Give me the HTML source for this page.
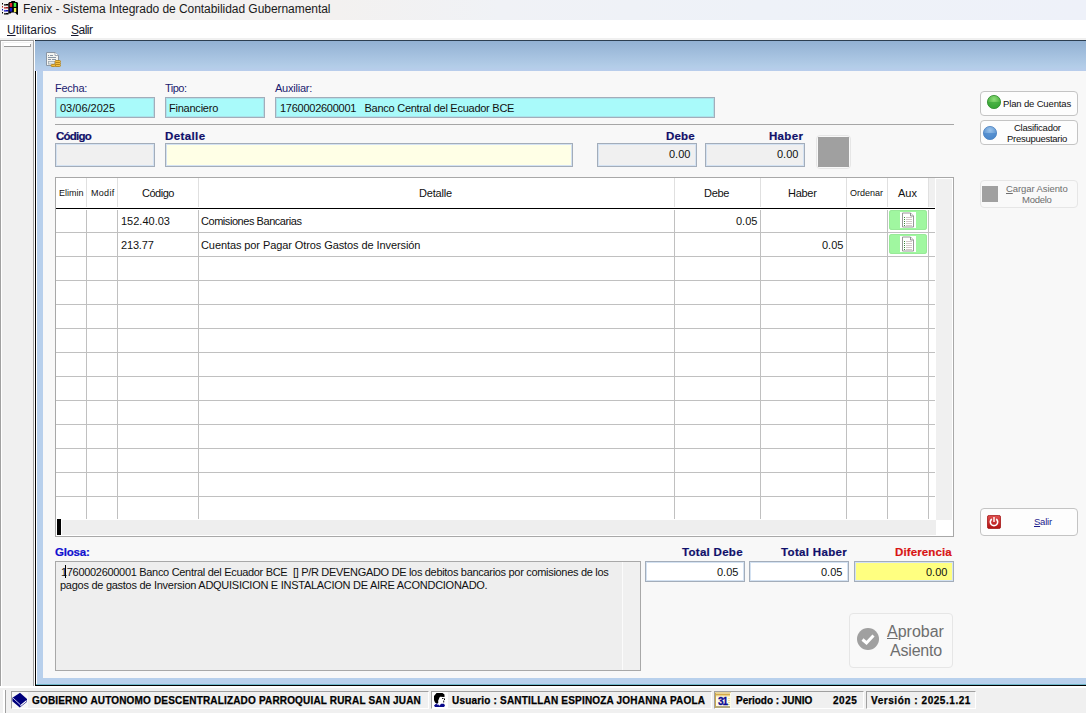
<!DOCTYPE html>
<html lang="es">
<head>
<meta charset="utf-8">
<title>Fenix - Sistema Integrado de Contabilidad Gubernamental</title>
<style>
html,body{margin:0;padding:0;}
body{width:1086px;height:713px;overflow:hidden;position:relative;background:#f0f0f0;font-family:"Liberation Sans",sans-serif;font-size:11px;color:#000;}
.a{position:absolute;white-space:nowrap;}
#titlebar{left:0;top:0;width:1086px;height:20px;background:linear-gradient(90deg,#f3f1f1 0%,#f3f1f0 31%,#f0f2f6 46%,#eef2f8 70%,#eef1f9 100%);}
#menubar{left:0;top:20px;width:1086px;height:18px;background:#fff;}
.tt{font-size:12px;line-height:14px;color:#1a1a1a;}
.mn{font-size:12px;line-height:14px;color:#18182c;}
.mn u{text-decoration:underline;text-underline-offset:1px;}
#leftpanel{left:0;top:40px;width:34px;height:647px;background:#f0f0f0;border:1px solid #a0a0a0;border-bottom:none;box-shadow:inset 1px 1px 0 #fff;box-sizing:border-box;}
#mdi{left:35px;top:40px;width:1051px;height:646px;background:#b8d0ec;border-top:1px solid #2c3e50;border-left:1px solid #000;border-bottom:1px solid #000;box-sizing:border-box;box-shadow:inset 0 -1px 0 #6fb6c8;}
#grad{left:35px;top:41px;width:1051px;height:30px;background:linear-gradient(#92b1d3,#b3cde8 85%,#b9cdec);}
#form{left:43px;top:71px;width:1043px;height:607px;background:#f8f8f8;}
.lbl{font-size:11px;line-height:13px;color:#1c1c70;}
.blbl{font-size:11.5px;line-height:13px;color:#10106a;font-weight:bold;-webkit-text-stroke-width:0.2px;}
.box{box-sizing:border-box;border:1px solid #a3adba;box-shadow:inset 0 0 0 1px #d4e2f2;}
.cy{background:#a9fafa;box-shadow:inset 0 0 0 1px #a9e2ea;}
.gy{background:#f0f0f0;}
.tx{font-size:11px;line-height:13px;color:#111;}
.r{text-align:right;}
.btn{box-sizing:border-box;border:1px solid #c4c4c4;border-radius:4px;background:#fdfdfd;}
.btnd{box-sizing:border-box;border:1px solid #e6e6e6;border-radius:4px;background:#f9f9f9;}
.bt{font-size:9.5px;line-height:11px;color:#111;text-align:center;}
.vl{width:1px;background:linear-gradient(#e0e0e0,#e0e0e0) 0 0/1px 29px no-repeat,linear-gradient(#fff,#fff) 0 29px/1px 3px no-repeat,#c0c0c0;}
.hl{height:1px;background:#c0c0c0;}
.th{font-size:11px;line-height:13px;color:#111;text-align:center;}
.ths{font-size:9px;line-height:11px;color:#111;text-align:center;}
.sp{box-sizing:border-box;border-left:1px solid #a0a0a0;border-top:1px solid #a0a0a0;border-right:1px solid #fff;border-bottom:1px solid #fff;height:18px;top:691px;}
.st{font-size:10px;line-height:13px;font-weight:bold;color:#000;top:694px;-webkit-text-stroke-width:0.25px;}
</style>
</head>
<body>
<!-- title bar -->
<div id="titlebar" class="a"></div>
<svg class="a" style="left:0px;top:0px" width="20" height="16" viewBox="0 0 20 16">
 <g fill="#000"><rect x="2" y="3" width="1" height="1.500"/><rect x="2" y="12" width="1" height="1.500"/>
 <path d="M4 4 L5 4.600 L6 4 L8.500 4 L8.500 5.500 L4 5.500 Z"/><path d="M4 13 L5 13.600 L6 13 L8.500 13 L8.500 14.600 L4 14.600 Z"/></g>
 <g fill="#b01818"><rect x="2" y="6" width="1" height="1.500"/><path d="M4 7 L5 7.600 L6 7 L8.500 7 L8.500 8.500 L4 8.500 Z"/></g>
 <g fill="#1010c0"><rect x="2" y="9" width="1" height="1.500"/><path d="M4 10 L5 10.600 L6 10 L8.500 10 L8.500 11.500 L4 11.500 Z"/></g>
 <path d="M8.300 3 L9.500 2 L11 2 L11.500 1 L14.800 1 L15.500 2 L17 2 L18 3 L18 14.800 L17 14.800 L15.200 12.500 L11.500 12.500 L10.500 13.600 L8.300 13.600 Z" fill="#000"/>
 <rect x="9.700" y="3" width="2.500" height="3.900" fill="#e82830"/>
 <rect x="13.700" y="2.900" width="2.500" height="4" fill="#38e840"/>
 <rect x="9.700" y="7.900" width="2.500" height="3.700" fill="#1818c8"/>
 <rect x="13.900" y="8" width="2.300" height="4" fill="#f0f050"/>
</svg>
<div id="t_title" class="a tt" style="left:23px;top:2px;letter-spacing:-0.05px;">Fenix - Sistema Integrado de Contabilidad Gubernamental</div>
<!-- menu bar -->
<div id="menubar" class="a"></div>
<div id="t_m1" class="a mn" style="left:7px;top:23px;"><u>U</u>tilitarios</div>
<div id="t_m2" class="a mn" style="left:71px;top:23px;letter-spacing:-0.50px;"><u>S</u>alir</div>

<!-- left panel -->
<div id="leftpanel" class="a"></div>
<div class="a" style="left:4px;top:43px;width:27px;height:3px;background:#fff;"></div>
<div class="a" style="left:4px;top:46px;width:27px;height:1px;background:#9a9a9a;"></div>
<div class="a" style="left:30px;top:44px;width:1px;height:3px;background:#9a9a9a;"></div>
<div class="a" style="left:34px;top:40px;width:1px;height:647px;background:#fff;"></div>

<!-- mdi area -->
<div id="mdi" class="a"></div>
<div id="grad" class="a"></div>
<div class="a" style="left:36px;top:71px;width:1px;height:613px;background:#fff;"></div>
<div id="form" class="a"></div>

<!-- toolbar icon -->
<svg class="a" style="left:45px;top:51px" width="17" height="17" viewBox="0 0 17 17">
 <path d="M1.5 1.5 H10 L13.5 4.5 V14.5 H1.5 Z" fill="#f4f4f0" stroke="#8a96a4" stroke-width="1"/>
 <path d="M10 1.5 V4.5 H13.500" fill="#fff" stroke="#8a96a4" stroke-width="0.8"/>
 <g fill="#8a96a4"><rect x="3" y="4" width="1" height="1"/><rect x="5" y="4" width="3" height="1"/><rect x="3" y="6" width="8" height="1"/><rect x="3" y="8" width="3" height="1"/><rect x="7" y="8" width="4" height="1"/></g>
 <rect x="3.500" y="10.5" width="6" height="2.500" fill="#e8ece8" stroke="#a0aab0" stroke-width="0.8"/>
 <g stroke="#b07c10" stroke-width="0.8" fill="#f4c040"><rect x="10" y="9.5" width="5.500" height="2" rx="1"/><rect x="10" y="11.5" width="5.500" height="2" rx="1"/><rect x="10" y="13.500" width="5.500" height="2" rx="1"/><rect x="6" y="13.500" width="4.500" height="2" rx="1"/></g>
</svg>

<!-- top fields -->
<div id="l_fecha" class="a lbl" style="left:55px;top:82px;letter-spacing:-0.24px;">Fecha:</div>
<div id="l_tipo" class="a lbl" style="left:165px;top:82px;letter-spacing:-0.50px;">Tipo:</div>
<div id="l_aux" class="a lbl" style="left:275px;top:82px;letter-spacing:-0.23px;">Auxiliar:</div>
<div class="a box cy" style="left:55px;top:97px;width:100px;height:21px;"></div>
<div class="a box cy" style="left:165px;top:97px;width:100px;height:21px;"></div>
<div class="a box cy" style="left:275px;top:97px;width:440px;height:21px;"></div>
<div id="v_fecha" class="a tx" style="left:60px;top:102px;">03/06/2025</div>
<div id="v_tipo" class="a tx" style="left:169px;top:102px;letter-spacing:-0.23px;">Financiero</div>
<div id="v_aux" class="a tx" style="left:280px;top:102px;letter-spacing:-0.26px;">1760002600001&nbsp;&nbsp; Banco Central del Ecuador BCE</div>

<div class="a" style="left:55px;top:124px;width:899px;height:1px;background:#a6a6a6;"></div>

<div id="l_cod" class="a blbl" style="left:56px;top:130px;letter-spacing:-0.75px;">Código</div>
<div id="l_det" class="a blbl" style="left:165px;top:130px;letter-spacing:0.40px;">Detalle</div>
<div id="l_debe" class="a blbl" style="left:666px;top:130px;letter-spacing:0.16px;">Debe</div>
<div id="l_haber" class="a blbl" style="left:769px;top:130px;letter-spacing:0.32px;">Haber</div>
<div class="a box gy" style="left:55px;top:143px;width:100px;height:24px;"></div>
<div class="a box" style="left:165px;top:143px;width:408px;height:24px;background:#ffffe6;"></div>
<div class="a box gy" style="left:597px;top:143px;width:100px;height:24px;"></div>
<div class="a box gy" style="left:705px;top:143px;width:100px;height:24px;"></div>
<div id="v_debe" class="a tx" style="left:669px;top:148px;">0.00</div>
<div id="v_haber" class="a tx" style="left:777px;top:148px;">0.00</div>
<div class="a btnd" style="left:816px;top:135px;width:35px;height:34px;"></div>
<div class="a" style="left:818px;top:137px;width:31px;height:30px;background:#a0a0a0;"></div>

<!-- grid -->
<div id="grid" class="a" style="left:55px;top:177px;width:899px;height:360px;box-sizing:border-box;border:1px solid #a8a8a8;background:#fff;"></div>
<div class="a" style="left:936px;top:179px;width:16px;height:341px;background:#f0f0f0;"></div>
<div class="a" style="left:929px;top:178px;width:6px;height:29px;background:#f0f0f0;"></div>
<div class="a" style="left:62px;top:520px;width:874px;height:15px;background:#eeeeee;"></div>
<div class="a" style="left:57px;top:519px;width:4px;height:16px;background:#000;"></div>
<!-- vertical lines -->
<div class="a vl" style="left:86px;top:178px;height:341px;"></div>
<div class="a vl" style="left:117px;top:178px;height:341px;"></div>
<div class="a vl" style="left:198px;top:178px;height:341px;"></div>
<div class="a vl" style="left:674px;top:178px;height:341px;"></div>
<div class="a vl" style="left:760px;top:178px;height:341px;"></div>
<div class="a vl" style="left:846px;top:178px;height:341px;"></div>
<div class="a vl" style="left:887px;top:178px;height:341px;"></div>
<div class="a vl" style="left:928px;top:178px;height:341px;"></div>
<!-- horizontal lines -->
<div class="a" style="left:56px;top:208px;width:879px;height:1px;background:#000;"></div>
<div class="a hl" style="left:56px;top:232px;width:879px;"></div>
<div class="a hl" style="left:56px;top:256px;width:879px;"></div>
<div class="a hl" style="left:56px;top:280px;width:879px;"></div>
<div class="a hl" style="left:56px;top:304px;width:879px;"></div>
<div class="a hl" style="left:56px;top:328px;width:879px;"></div>
<div class="a hl" style="left:56px;top:352px;width:879px;"></div>
<div class="a hl" style="left:56px;top:376px;width:879px;"></div>
<div class="a hl" style="left:56px;top:400px;width:879px;"></div>
<div class="a hl" style="left:56px;top:424px;width:879px;"></div>
<div class="a hl" style="left:56px;top:448px;width:879px;"></div>
<div class="a hl" style="left:56px;top:472px;width:879px;"></div>
<div class="a hl" style="left:56px;top:496px;width:879px;"></div>
<!-- header text -->
<div id="h_elim" class="a ths" style="left:59px;top:188px;text-align:left;">Elimin</div>
<div id="h_mod" class="a ths" style="left:91px;top:188px;text-align:left;letter-spacing:0.30px;">Modif</div>
<div id="h_cod" class="a th" style="left:142px;top:187px;text-align:left;letter-spacing:-0.48px;">Código</div>
<div id="h_det" class="a th" style="left:419px;top:187px;text-align:left;letter-spacing:-0.17px;">Detalle</div>
<div id="h_debe" class="a th" style="left:704px;top:187px;text-align:left;letter-spacing:-0.29px;">Debe</div>
<div id="h_haber" class="a th" style="left:788px;top:187px;text-align:left;letter-spacing:-0.28px;">Haber</div>
<div id="h_ord" class="a ths" style="left:850px;top:188px;text-align:left;">Ordenar</div>
<div id="h_auxc" class="a th" style="left:898px;top:187px;text-align:left;">Aux</div>
<!-- rows -->
<div id="r1c" class="a tx" style="left:121px;top:215px;">152.40.03</div>
<div id="r1d" class="a tx" style="left:201px;top:215px;letter-spacing:-0.45px;">Comisiones Bancarias</div>
<div id="r1v" class="a tx" style="left:736px;top:215px;">0.05</div>
<div id="r2c" class="a tx" style="left:121px;top:239px;letter-spacing:-0.16px;">213.77</div>
<div id="r2d" class="a tx" style="left:201px;top:239px;letter-spacing:-0.09px;">Cuentas por Pagar Otros Gastos de Inversión</div>
<div id="r2v" class="a tx" style="left:822px;top:239px;">0.05</div>
<!-- aux buttons -->
<div class="a" style="left:889px;top:210px;width:38px;height:20px;background:#a0f7a0;border-radius:3px;box-shadow:inset 0 0 0 1px #98ea98;"></div>
<div class="a" style="left:889px;top:234px;width:38px;height:20px;background:#a0f7a0;border-radius:3px;box-shadow:inset 0 0 0 1px #98ea98;"></div>
<svg class="a" style="left:900px;top:212px" width="16" height="16" viewBox="0 0 16 16">
 <rect x="0" y="0" width="16" height="16" fill="#fff"/>
 <path d="M2.500 1 H10.500 L13.500 4 V15 H2.500 Z" fill="#fff" stroke="#8c8c8c" stroke-width="0.900"/>
 <path d="M10.500 1 V4 H13.500" fill="#f4f4f4" stroke="#7c7c7c" stroke-width="0.800"/>
 <g fill="#3c8a3c"><rect x="4" y="5" width="1" height="1"/><rect x="4" y="7" width="1" height="1"/><rect x="4" y="9" width="1" height="1"/><rect x="4" y="11" width="1" height="1"/><rect x="4" y="13" width="1" height="1"/></g>
 <g fill="#d4c8c8"><rect x="6" y="5" width="6" height="1"/><rect x="6" y="7" width="6" height="1"/><rect x="6" y="9" width="6" height="1"/><rect x="6" y="11" width="6" height="1"/><rect x="6" y="13" width="6" height="1"/></g>
</svg>
<svg class="a" style="left:900px;top:236px" width="16" height="16" viewBox="0 0 16 16">
 <rect x="0" y="0" width="16" height="16" fill="#fff"/>
 <path d="M2.500 1 H10.500 L13.500 4 V15 H2.500 Z" fill="#fff" stroke="#8c8c8c" stroke-width="0.900"/>
 <path d="M10.500 1 V4 H13.500" fill="#f4f4f4" stroke="#7c7c7c" stroke-width="0.800"/>
 <g fill="#3c8a3c"><rect x="4" y="5" width="1" height="1"/><rect x="4" y="7" width="1" height="1"/><rect x="4" y="9" width="1" height="1"/><rect x="4" y="11" width="1" height="1"/><rect x="4" y="13" width="1" height="1"/></g>
 <g fill="#d4c8c8"><rect x="6" y="5" width="6" height="1"/><rect x="6" y="7" width="6" height="1"/><rect x="6" y="9" width="6" height="1"/><rect x="6" y="11" width="6" height="1"/><rect x="6" y="13" width="6" height="1"/></g>
</svg>

<!-- glosa -->
<div id="l_glosa" class="a blbl" style="left:55px;top:546px;color:#1010d0;letter-spacing:-0.19px;">Glosa:</div>
<div id="glosa" class="a" style="left:55px;top:561px;width:586px;height:110px;box-sizing:border-box;border:1px solid #a8a8a8;background:#eeeeee;"></div>
<div class="a" style="left:622px;top:562px;width:1px;height:108px;background:#fbfbfb;"></div>
<div class="a" style="left:623px;top:562px;width:17px;height:108px;background:#f0f0f0;"></div>
<div id="g1" class="a tx" style="left:61px;top:566px;letter-spacing:-0.31px;">1760002600001 Banco Central del Ecuador BCE&nbsp; [] P/R DEVENGADO DE los debitos bancarios por comisiones de los</div>
<div id="g2" class="a tx" style="left:60px;top:579px;letter-spacing:-0.27px;">pagos de gastos de Inversion ADQUISICION E INSTALACION DE AIRE ACONDCIONADO.</div>
<div class="a" style="left:65px;top:565px;width:1px;height:13px;background:#000;"></div>

<!-- totals -->
<div id="l_td" class="a blbl" style="left:682px;top:546px;letter-spacing:0.29px;">Total Debe</div>
<div id="l_th" class="a blbl" style="left:781px;top:546px;letter-spacing:0.34px;">Total Haber</div>
<div id="l_df" class="a blbl" style="left:895px;top:546px;color:#d81414;letter-spacing:0.11px;">Diferencia</div>
<div class="a box" style="left:645px;top:561px;width:100px;height:21px;background:#fff;"></div>
<div class="a box" style="left:749px;top:561px;width:100px;height:21px;background:#fff;"></div>
<div class="a box" style="left:854px;top:561px;width:100px;height:21px;background:#ffff80;"></div>
<div id="v_td" class="a tx" style="left:717px;top:566px;">0.05</div>
<div id="v_th" class="a tx" style="left:821px;top:566px;">0.05</div>
<div id="v_df" class="a tx" style="left:926px;top:566px;">0.00</div>

<!-- aprobar -->
<div class="a btnd" style="left:849px;top:613px;width:104px;height:55px;"></div>
<svg class="a" style="left:856px;top:627px" width="24" height="24" viewBox="0 0 24 24">
 <circle cx="12" cy="12" r="11" fill="#a0a0a0"/>
 <path d="M6.500 12.500 L10.500 16 L17.500 8.500" fill="none" stroke="#fff" stroke-width="3"/>
</svg>
<div id="ap1" class="a" style="left:887px;top:623px;font-size:16px;line-height:18px;color:#6e6e6e;"><u>A</u>probar</div>
<div id="ap2" class="a" style="left:890px;top:642px;font-size:16px;line-height:18px;color:#6e6e6e;letter-spacing:-0.19px;">Asiento</div>

<!-- right buttons -->
<div class="a btn" style="left:980px;top:91px;width:98px;height:25px;"></div>
<svg class="a" style="left:986px;top:94px" width="16" height="16" viewBox="0 0 16 16">
 <defs><radialGradient id="gg" cx="0.5" cy="0.3" r="0.7"><stop offset="0" stop-color="#8fe07a"/><stop offset="1" stop-color="#2f9a2a"/></radialGradient></defs>
 <circle cx="8" cy="8" r="6.600" fill="url(#gg)" stroke="#2a8a2a" stroke-width="0.8"/>
 <path d="M1.800 8 A6.200 6.200 0 0 0 14.200 8 Z" fill="#3aa83a" opacity="0.7"/>
</svg>
<div id="b_plan" class="a bt" style="left:1003px;top:98px;letter-spacing:-0.15px;">Plan de Cuentas</div>

<div class="a btn" style="left:980px;top:120px;width:98px;height:25px;"></div>
<svg class="a" style="left:982px;top:125px" width="16" height="16" viewBox="0 0 16 16">
 <defs><radialGradient id="bg" cx="0.5" cy="0.3" r="0.7"><stop offset="0" stop-color="#9cc4ec"/><stop offset="1" stop-color="#4a86c8"/></radialGradient></defs>
 <circle cx="8" cy="8" r="6.600" fill="url(#bg)" stroke="#4a80c0" stroke-width="0.8"/>
 <path d="M1.800 8 A6.200 6.200 0 0 0 14.200 8 Z" fill="#4a88cc" opacity="0.7"/>
</svg>
<div id="b_cl1" class="a bt" style="left:1014px;top:122px;text-align:left;letter-spacing:-0.25px;">Clasificador</div>
<div id="b_cl2" class="a bt" style="left:1007px;top:133px;text-align:left;letter-spacing:-0.27px;">Presupuestario</div>

<div class="a btnd" style="left:980px;top:180px;width:98px;height:28px;"></div>
<div class="a" style="left:982px;top:186px;width:16px;height:16px;background:#a0a0a0;"></div>
<div id="b_ca1" class="a bt" style="left:1006px;top:183px;color:#6e6e6e;text-align:left;letter-spacing:-0.09px;"><u>C</u>argar Asiento</div>
<div id="b_ca2" class="a bt" style="left:1022px;top:194px;color:#6e6e6e;text-align:left;letter-spacing:-0.25px;">Modelo</div>

<div class="a btn" style="left:980px;top:508px;width:98px;height:28px;"></div>
<svg class="a" style="left:987px;top:515px" width="14" height="14" viewBox="0 0 14 14">
 <defs><linearGradient id="rg" x1="0" y1="0" x2="0" y2="1"><stop offset="0" stop-color="#e05050"/><stop offset="1" stop-color="#b01010"/></linearGradient></defs>
 <rect x="0.400" y="0.400" width="13.200" height="13.200" rx="1.800" fill="url(#rg)" stroke="#a01010" stroke-width="0.800"/>
 <path d="M4.800 4 A3.700 3.700 0 1 0 9.200 4" fill="none" stroke="#fff" stroke-width="1.600"/>
 <rect x="6.300" y="2" width="1.400" height="5" fill="#fff"/>
</svg>
<div id="b_salir" class="a bt" style="left:1034px;top:516px;color:#1a1a8c;letter-spacing:-0.24px;"><u>S</u>alir</div>

<!-- mdi bottom -->
<div class="a" style="left:0;top:686px;width:1086px;height:2px;background:#fff;"></div>
<!-- status bar -->
<div class="a" style="left:3px;top:690px;width:2px;height:23px;background:#fff;"></div>
<div class="a" style="left:5px;top:690px;width:1px;height:23px;background:#a0a0a0;"></div>
<div class="a sp" style="left:11px;width:418px;"></div>
<div class="a sp" style="left:431px;width:281px;"></div>
<div class="a sp" style="left:714px;width:150px;"></div>
<div class="a sp" style="left:866px;width:110px;"></div>
<svg class="a" style="left:12px;top:692px" width="16" height="16" viewBox="0 0 16 16">
 <rect x="0" y="0" width="16" height="16" fill="#f8f8f8"/>
 <path d="M8 0.800 L15 7 L15 9.800 L7.800 15.600 L0.400 9.300 L0.400 5.800 Z" fill="#00007c"/>
 <path d="M8.300 13 L14.600 8 L14.600 9.600 L8.300 14.600 Z" fill="#fff"/>
 <path d="M0.700 5.800 L8.100 12.500" stroke="#d8d8ff" stroke-width="0.900" fill="none"/>
</svg>
<div id="s1" class="a st" style="left:32px;letter-spacing:0.17px;">GOBIERNO AUTONOMO DESCENTRALIZADO PARROQUIAL RURAL SAN JUAN</div>
<svg class="a" style="left:432px;top:692px" width="16" height="16" viewBox="0 0 16 16">
 <rect x="0" y="0" width="16" height="16" fill="#fff"/>
 <path d="M4.500 1 H10.500 L12.500 2.500 V5 L8 5 L6.500 8 L6.500 10.500 L5 11.800 L3 10.500 L2 8 V4 Z" fill="#000"/>
 <path d="M8 4.800 L12.200 5 L12.900 7 L11.800 8 L11.600 10.300 L9 10.800 L7 11.600 L6.300 9 Z" fill="#fff"/>
 <rect x="10" y="6" width="1.500" height="1" fill="#222"/>
 <rect x="12" y="6.500" width="1" height="1.500" fill="#000"/>
 <rect x="11.300" y="8.500" width="0.900" height="2" fill="#000"/>
 <path d="M6 11 L9 10.800 L8.500 13 L7.500 13.800 Z" fill="#fff"/>
 <path d="M2 13.500 L4 11.800 L5.500 11.500 L7.500 13.800 L9 11.800 L12 11.800 L13 13.500 L12 15 H3 Z" fill="#0a0a8c"/>
 <path d="M4.500 12.500 L6 12 L6.800 13.200 Z" fill="#dcdcff"/>
</svg>
<div id="s2" class="a st" style="left:452px;letter-spacing:0.19px;">Usuario : SANTILLAN ESPINOZA JOHANNA PAOLA</div>
<svg class="a" style="left:715px;top:692px" width="16" height="16" viewBox="0 0 16 16">
 <rect x="0" y="0" width="16" height="16" fill="#fdfbe8"/>
 <rect x="0" y="0" width="1" height="16" fill="#c8a850"/>
 <rect x="0" y="0" width="16" height="1" fill="#e8d498"/>
 <rect x="1" y="1.500" width="14" height="2" fill="#d4aa48"/>
 <rect x="1" y="3.500" width="14" height="0.800" fill="#ecd080"/>
 <g fill="#f0e0a0"><rect x="13" y="6" width="2" height="1"/><rect x="13" y="8" width="2" height="1"/><rect x="13" y="10" width="2" height="1"/><rect x="13" y="12" width="2" height="1"/></g>
 <rect x="1" y="14.500" width="14" height="1" fill="#6a5a18"/>
</svg>
<div id="c31" class="a" style="left:718px;top:697px;font-size:10px;line-height:10px;font-weight:bold;color:#0c0c94;letter-spacing:-1px;-webkit-text-stroke-width:0.3px;">31</div>
<div id="s3" class="a st" style="left:736px;letter-spacing:-0.03px;">Periodo : JUNIO</div>
<div id="s3b" class="a st" style="left:833px;letter-spacing:0.56px;">2025</div>
<div id="s4" class="a st" style="left:871px;letter-spacing:0.55px;">Versión : 2025.1.21</div>
</body>
</html>
